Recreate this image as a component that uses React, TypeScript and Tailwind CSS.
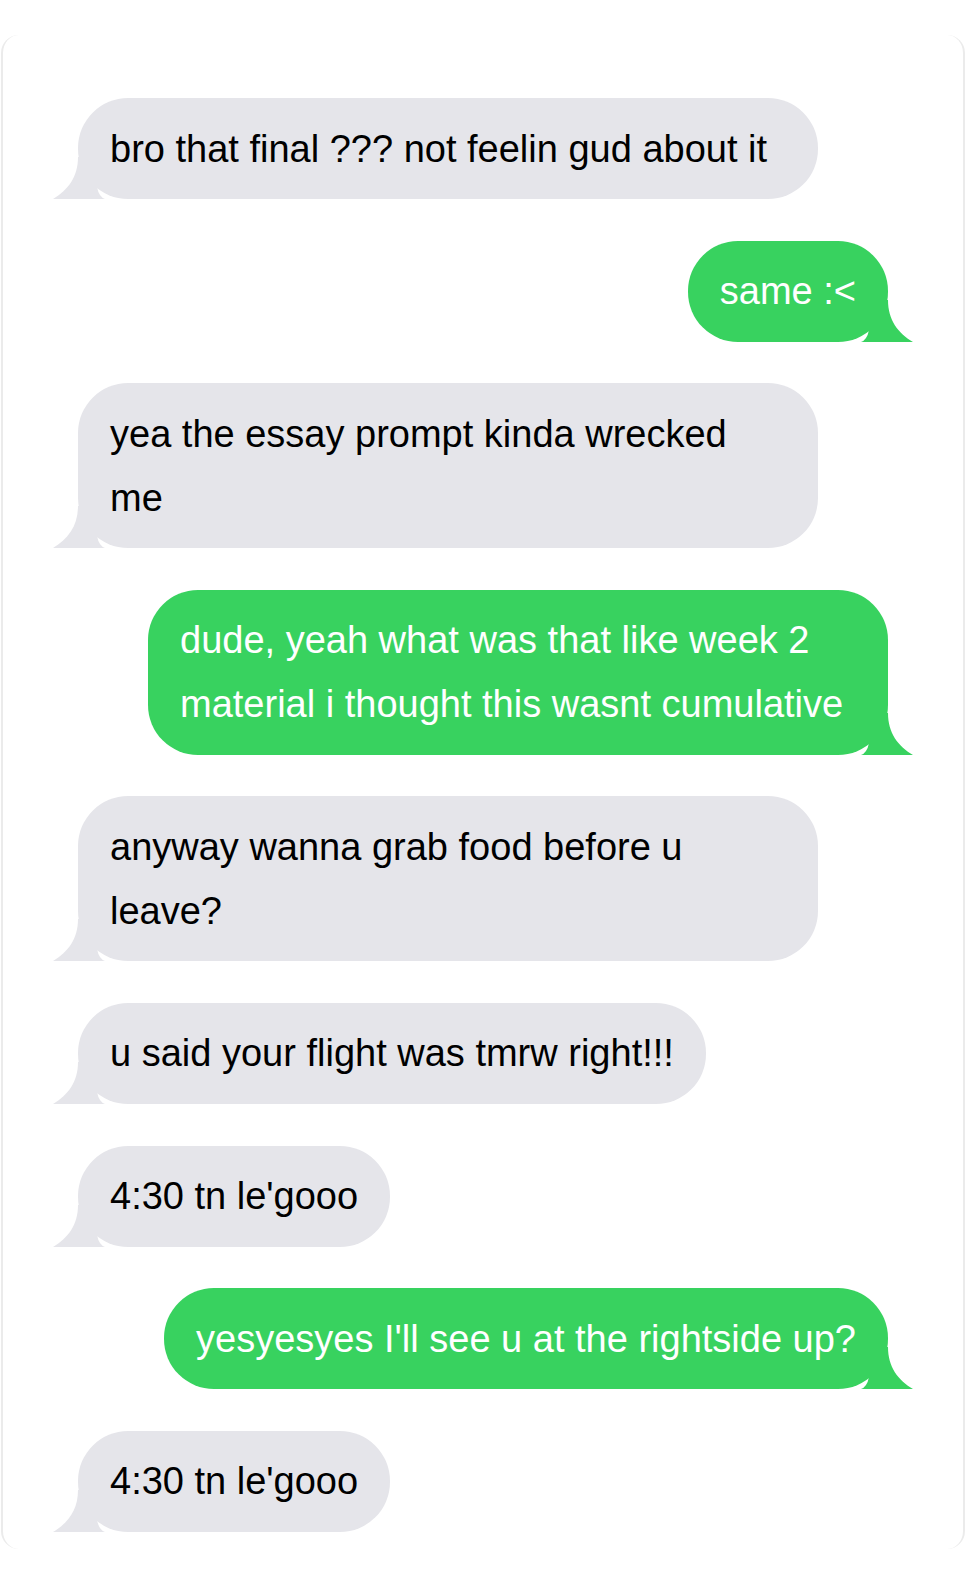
import React from 'react';

type Msg = { from: 'them' | 'me'; text: string; wide?: boolean };

const messages: Msg[] = [
    { from: 'them', text: 'bro that final ??? not feelin gud about it', wide: true },
    { from: 'me', text: 'same :<' },
    { from: 'them', text: 'yea the essay prompt kinda wrecked me' },
    { from: 'me', text: 'dude, yeah what was that like week 2 material i thought this wasnt cumulative' },
    { from: 'them', text: 'anyway wanna grab food before u leave?' },
    { from: 'them', text: 'u said your flight was tmrw right!!!' },
    { from: 'them', text: "4:30 tn le'gooo" },
    { from: 'me', text: "yesyesyes I'll see u at the rightside up?" },
    { from: 'them', text: "4:30 tn le'gooo" },
];

// little curled tail at the bottom corner of a bubble
function Tail({ side }: { side: 'left' | 'right' }) {
    return (
        <svg
            width="60"
            height="42"
            viewBox="0 0 60 42"
            className={
                side === 'left'
                    ? 'absolute bottom-0 left-[-25px]'
                    : 'absolute bottom-0 right-[-25px] -scale-x-100'
            }
        >
            <path
                d="M25 0 C25 20 15 33 0 42 L52 42 Q46 40 44 30 L44 0 Z"
                fill="currentColor"
            />
        </svg>
    );
}

function Bubble({ msg }: { msg: Msg }) {
    const mine = msg.from === 'me';
    const base = mine
        ? 'relative self-end max-w-[740px] rounded-[50px] bg-[#38d25f] text-[#38d25f] px-[32px] py-[18.5px]'
        : 'relative self-start max-w-[740px] rounded-[50px] bg-[#e5e5ea] text-[#e5e5ea] px-[32px] py-[18.5px]';
    return (
        <div className={msg.wide ? base + ' w-[740px]' : base}>
            <Tail side={mine ? 'right' : 'left'} />
            <p className={mine ? 'relative text-white' : 'relative text-black'}>{msg.text}</p>
        </div>
    );
}

export default function App() {
    return (
        <div className="min-h-screen bg-white pt-[35px] px-[1px] pb-[38px] font-['Liberation_Sans',Arial,sans-serif] text-[38px] leading-[64px]">
            <div className="flex flex-col gap-[41.6px] rounded-[18px] border-x-2 border-[#ebebeb] px-[75px] pt-[63px] pb-[17px]">
                {messages.map((m, i) => (
                    <Bubble key={i} msg={m} />
                ))}
            </div>
        </div>
    );
}
